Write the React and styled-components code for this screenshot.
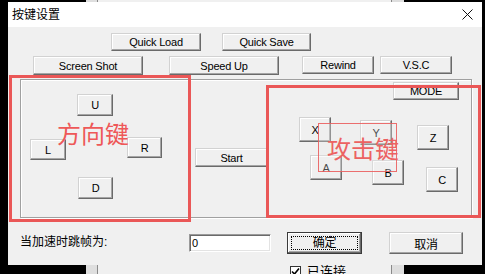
import React from "react";
import styled, { createGlobalStyle } from "styled-components";

const GlobalStyle = createGlobalStyle`
  html, body { margin: 0; padding: 0; background: #000; overflow: hidden; }
  * { box-sizing: border-box; }
`;

const UI = `"Liberation Sans", Arial, sans-serif`;
const CJK = `"Liberation Sans", "Noto Sans CJK SC", sans-serif`;

const Desktop = styled.div`
  position: relative;
  width: 485px;
  height: 274px;
  background: #000;
  overflow: hidden;
`;

const BackWindow = styled.div`
  position: absolute;
  left: 86px;
  top: 0;
  width: 318px;
  height: 274px;
  background: #dedede;
  display: flex;
  padding: 0 12px 0 11px;
`;

const BackPanel = styled.div`
  flex: 1;
  background: #f0f0f0;
  border-left: 1px solid #8a8a8a;
  border-right: 1px solid #8a8a8a;
  display: flex;
  align-items: flex-start;
  padding: 266px 0 0 192px;
  gap: 6px;
`;

const Check = styled.div`
  width: 11px;
  height: 11px;
  border: 1px solid #333;
  background: #fff;
  display: flex;
  align-items: center;
  justify-content: center;
`;

const BackLabel = styled.span`
  font: 13px ${CJK};
  line-height: 12px;
  color: #000;
`;

const Dialog = styled.div`
  position: absolute;
  left: 8px;
  top: 2px;
  width: 474px;
  height: 263px;
  background: #f0f0f0;
  display: flex;
  flex-direction: column;
`;

const TitleBar = styled.div`
  height: 25px;
  background: #fff;
  display: flex;
  align-items: center;
  justify-content: space-between;
  padding: 0 9px 0 4px;
  flex-shrink: 0;
`;

const Title = styled.span`
  font: 12px ${CJK};
  color: #000;
  line-height: 14px;
`;

const Body = styled.div`
  display: flex;
  flex-direction: column;
  padding-top: 6px;
`;

const ButtonRow = styled.div`
  display: flex;
  align-items: flex-start;
  padding-left: ${(p) => p.$pad}px;
  gap: ${(p) => p.$gap}px;
  margin-top: ${(p) => p.$top || 0}px;
`;

const WinButton = styled.button`
  width: ${(p) => p.$w}px;
  height: ${(p) => p.$h}px;
  margin-left: ${(p) => p.$ml || 0}px;
  padding: 0;
  background: #f0f0f0;
  color: #000;
  font: 11px ${UI};
  letter-spacing: -0.2px;
  border: 1px solid;
  border-color: #d2d2d2 #6a6a6a #6a6a6a #d2d2d2;
  box-shadow: inset -1px -1px 0 #a5a5a5, inset 1px 1px 0 #fff;
  display: flex;
  align-items: center;
  justify-content: center;
  flex-shrink: 0;
`;

const KeyFrame = styled.div`
  position: relative;
  margin: 4px 0 0 12px;
  width: 452px;
  height: 139px;
  border: 1px solid #a0a0a0;
  box-shadow: 1px 1px 0 #fff, inset 1px 1px 0 #fff;
`;

const KeyButton = styled(WinButton)`
  position: absolute;
  left: ${(p) => p.$x}px;
  top: ${(p) => p.$y}px;
`;

const Footer = styled.div`
  display: flex;
  align-items: center;
  height: 22px;
  margin-top: 14px;
  padding-left: 12px;
`;

const FooterLabel = styled.span`
  width: 169px;
  font: 12px ${CJK};
  line-height: 14px;
  color: #000;
  margin-top: -3px;
`;

const NumberInput = styled.input`
  width: 82px;
  height: 18px;
  margin-right: 16px;
  padding: 0 0 0 2px;
  background: #fff;
  color: #000;
  font: 11px ${UI};
  border: 1px solid;
  border-color: #9a9a9a #fff #fff #9a9a9a;
  box-shadow: inset 1px 1px 0 #6a6a6a, inset -1px -1px 0 #e3e3e3;
  outline: none;
`;

const DialogButton = styled(WinButton)`
  font: 12px ${CJK};
  margin-right: ${(p) => p.$mr || 0}px;
  border-color: ${(p) => (p.$default ? "#3a3a3a" : "#d2d2d2 #6a6a6a #6a6a6a #d2d2d2")};
  box-shadow: ${(p) =>
    p.$default
      ? "inset -1px -1px 0 #6a6a6a, inset 1px 1px 0 #fff, inset -2px -2px 0 #a5a5a5"
      : "inset -1px -1px 0 #a5a5a5, inset 1px 1px 0 #fff"};
  padding: 3px;
`;

const FocusRect = styled.span`
  flex: 1;
  align-self: stretch;
  display: flex;
  align-items: center;
  justify-content: center;
  border: 1px dotted #000;
  line-height: 12px;
`;

const RedBox = styled.div`
  position: absolute;
  left: ${(p) => p.$x}px;
  top: ${(p) => p.$y}px;
  width: ${(p) => p.$w}px;
  height: ${(p) => p.$h}px;
  border: ${(p) => p.$t}px solid ${(p) => p.$c};
  background: ${(p) => p.$fill || "transparent"};
  pointer-events: none;
`;

const RedText = styled.span`
  position: absolute;
  left: ${(p) => p.$x}px;
  top: ${(p) => p.$y}px;
  font: 24px "Noto Sans CJK SC", sans-serif;
  line-height: 24px;
  color: ${(p) => p.$c};
  white-space: nowrap;
  pointer-events: none;
`;

const keys = [
  { label: "U", x: 56, y: 14, w: 36, h: 22 },
  { label: "L", x: 9, y: 59, w: 36, h: 21 },
  { label: "R", x: 106, y: 57, w: 35, h: 21 },
  { label: "D", x: 57, y: 97, w: 35, h: 22 },
  { label: "Start", x: 174, y: 68, w: 73, h: 19 },
  { label: "MODE", x: 372, y: 2, w: 66, h: 18 },
  { label: "X", x: 278, y: 37, w: 32, h: 25 },
  { label: "Y", x: 339, y: 40, w: 32, h: 25 },
  { label: "Z", x: 396, y: 45, w: 32, h: 25 },
  { label: "A", x: 289, y: 75, w: 32, h: 25 },
  { label: "B", x: 351, y: 80, w: 32, h: 25 },
  { label: "C", x: 405, y: 87, w: 32, h: 25 },
];

export default function App() {
  return (
    <Desktop>
      <GlobalStyle />
      <BackWindow>
        <BackPanel>
          <Check>
            <svg width="9" height="9" viewBox="0 0 9 9">
              <path d="M1 4.5 L3.5 7 L8 1.5" fill="none" stroke="#000" strokeWidth="1.6" />
            </svg>
          </Check>
          <BackLabel>已连接</BackLabel>
        </BackPanel>
      </BackWindow>
      <Dialog>
        <TitleBar>
          <Title>按键设置</Title>
          <svg width="11" height="11" viewBox="0 0 11 11">
            <path d="M0.5 0.5 L10.5 10.5 M10.5 0.5 L0.5 10.5" stroke="#111" strokeWidth="1" />
          </svg>
        </TitleBar>
        <Body>
          <ButtonRow $pad={103} $gap={21}>
            <WinButton $w={90} $h={18}>Quick Load</WinButton>
            <WinButton $w={89} $h={18}>Quick Save</WinButton>
          </ButtonRow>
          <ButtonRow $pad={25} $gap={0} $top={5}>
            <WinButton $w={110} $h={19}>Screen Shot</WinButton>
            <WinButton $w={110} $h={19} $ml={26}>Speed Up</WinButton>
            <WinButton $w={72} $h={18} $ml={23}>Rewind</WinButton>
            <WinButton $w={72} $h={18} $ml={6}>V.S.C</WinButton>
          </ButtonRow>
          <KeyFrame>
            {keys.map((k) => (
              <KeyButton key={k.label} $x={k.x} $y={k.y} $w={k.w} $h={k.h}>
                {k.label}
              </KeyButton>
            ))}
          </KeyFrame>
          <Footer>
            <FooterLabel>当加速时跳帧为:</FooterLabel>
            <NumberInput defaultValue="0" readOnly />
            <DialogButton $w={75} $h={22} $mr={27} $default>
              <FocusRect>确定</FocusRect>
            </DialogButton>
            <DialogButton $w={74} $h={22}>取消</DialogButton>
          </Footer>
        </Body>
        <RedBox $x={1} $y={73} $w={182} $h={147} $t={3} $c="#ea5757" />
        <RedText $x={49} $y={119} $c="#ee5858">方向键</RedText>
        <RedBox $x={258} $y={83} $w={215} $h={133} $t={3} $c="#ea5757" />
        <RedBox
          $x={310}
          $y={121}
          $w={79}
          $h={49}
          $t={1}
          $c="rgba(234,87,87,0.85)"
          $fill="rgba(240,240,240,0.3)"
        />
        <RedText $x={319} $y={134} $c="#ec6262">攻击键</RedText>
      </Dialog>
    </Desktop>
  );
}
